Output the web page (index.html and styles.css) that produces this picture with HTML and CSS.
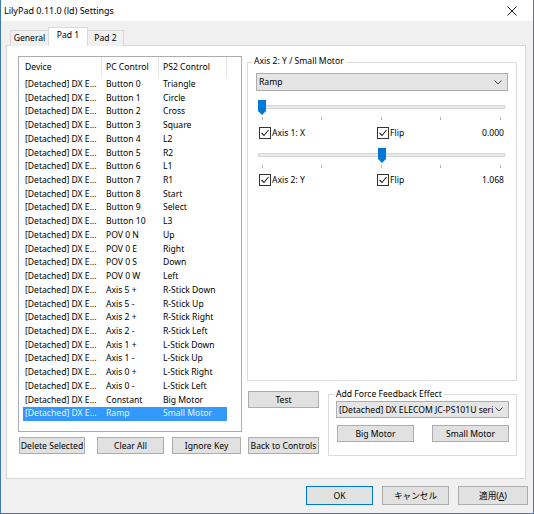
FILE: index.html
```html
<!DOCTYPE html>
<html>
<head>
<meta charset="utf-8">
<link rel="stylesheet" href="styles.css">
</head>
<body>
<div class="window">
  <div class="titlebar">
    <span class="title">LilyPad 0.11.0 (ld) Settings</span>
    <svg class="close" width="10" height="10" viewBox="0 0 10 10"><path d="M0.5 0.5 L9.5 9.5 M9.5 0.5 L0.5 9.5" stroke="#1a1a1a" stroke-width="1" fill="none"/></svg>
  </div>
  <div class="client">
    <div class="tabs">
      <div class="tab t-general">General</div>
      <div class="tab t-pad1 sel">Pad 1</div>
      <div class="tab t-pad2">Pad 2</div>
    </div>
    <div class="panel">
      <div class="leftcol">
        <div class="list">
          <div class="lhead">
            <div class="h1">Device</div>
            <div class="h2">PC Control</div>
            <div class="h3">PS2 Control</div>
          </div>
          <div class="row"><span class="c1">[Detached] DX E...</span><span class="c2">Button 0</span><span class="c3">Triangle</span></div>
          <div class="row"><span class="c1">[Detached] DX E...</span><span class="c2">Button 1</span><span class="c3">Circle</span></div>
          <div class="row"><span class="c1">[Detached] DX E...</span><span class="c2">Button 2</span><span class="c3">Cross</span></div>
          <div class="row"><span class="c1">[Detached] DX E...</span><span class="c2">Button 3</span><span class="c3">Square</span></div>
          <div class="row"><span class="c1">[Detached] DX E...</span><span class="c2">Button 4</span><span class="c3">L2</span></div>
          <div class="row"><span class="c1">[Detached] DX E...</span><span class="c2">Button 5</span><span class="c3">R2</span></div>
          <div class="row"><span class="c1">[Detached] DX E...</span><span class="c2">Button 6</span><span class="c3">L1</span></div>
          <div class="row"><span class="c1">[Detached] DX E...</span><span class="c2">Button 7</span><span class="c3">R1</span></div>
          <div class="row"><span class="c1">[Detached] DX E...</span><span class="c2">Button 8</span><span class="c3">Start</span></div>
          <div class="row"><span class="c1">[Detached] DX E...</span><span class="c2">Button 9</span><span class="c3">Select</span></div>
          <div class="row"><span class="c1">[Detached] DX E...</span><span class="c2">Button 10</span><span class="c3">L3</span></div>
          <div class="row"><span class="c1">[Detached] DX E...</span><span class="c2">POV 0 N</span><span class="c3">Up</span></div>
          <div class="row"><span class="c1">[Detached] DX E...</span><span class="c2">POV 0 E</span><span class="c3">Right</span></div>
          <div class="row"><span class="c1">[Detached] DX E...</span><span class="c2">POV 0 S</span><span class="c3">Down</span></div>
          <div class="row"><span class="c1">[Detached] DX E...</span><span class="c2">POV 0 W</span><span class="c3">Left</span></div>
          <div class="row"><span class="c1">[Detached] DX E...</span><span class="c2">Axis 5 +</span><span class="c3">R-Stick Down</span></div>
          <div class="row"><span class="c1">[Detached] DX E...</span><span class="c2">Axis 5 -</span><span class="c3">R-Stick Up</span></div>
          <div class="row"><span class="c1">[Detached] DX E...</span><span class="c2">Axis 2 +</span><span class="c3">R-Stick Right</span></div>
          <div class="row"><span class="c1">[Detached] DX E...</span><span class="c2">Axis 2 -</span><span class="c3">R-Stick Left</span></div>
          <div class="row"><span class="c1">[Detached] DX E...</span><span class="c2">Axis 1 +</span><span class="c3">L-Stick Down</span></div>
          <div class="row"><span class="c1">[Detached] DX E...</span><span class="c2">Axis 1 -</span><span class="c3">L-Stick Up</span></div>
          <div class="row"><span class="c1">[Detached] DX E...</span><span class="c2">Axis 0 +</span><span class="c3">L-Stick Right</span></div>
          <div class="row"><span class="c1">[Detached] DX E...</span><span class="c2">Axis 0 -</span><span class="c3">L-Stick Left</span></div>
          <div class="row"><span class="c1">[Detached] DX E...</span><span class="c2">Constant</span><span class="c3">Big Motor</span></div>
          <div class="row selected"><span class="c1">[Detached] DX E...</span><span class="c2">Ramp</span><span class="c3">Small Motor</span></div>
        </div>
        <div class="btnrow">
          <div class="btn b-delete">Delete Selected</div>
          <div class="btn b-clear">Clear All</div>
          <div class="btn b-ignore">Ignore Key</div>
        </div>
      </div>
      <div class="rightcol">
        <div class="group g-axis">
          <div class="legend">Axis 2: Y / Small Motor</div>
          <div class="combo c-ramp">
            <span>Ramp</span>
            <svg class="chev" width="8" height="5" viewBox="0 0 8 5"><path d="M0.5 0.5 L4 4 L7.5 0.5" stroke="#444" stroke-width="1" fill="none"/></svg>
          </div>
          <svg class="slider s1" width="252" height="23" viewBox="0 0 252 23">
            <rect x="2.5" y="7.5" width="246" height="3" fill="#e7eaea" stroke="#d6d6d6" stroke-width="1"/>
            <g fill="#b5b5b5">
              <rect x="6" y="19" width="1" height="3"/>
              <rect x="65" y="19" width="1" height="3"/>
              <rect x="125" y="19" width="1" height="3"/>
              <rect x="184" y="19" width="1" height="3"/>
              <rect x="244" y="19" width="1" height="3"/>
            </g>
            <polygon points="2,2 10,2 10,13 6,17 2,13" fill="#0078d7"/>
          </svg>
          <div class="chkrow">
            <div class="chkitem first">
              <svg class="chk" width="12" height="12" viewBox="0 0 12 12"><rect x="0.5" y="0.5" width="11" height="11" fill="#fff" stroke="#333"/><path d="M2.5 6 L5 8.5 L9.5 3" stroke="#222" stroke-width="1.1" fill="none"/></svg>
              <span>Axis 1: X</span>
            </div>
            <div class="chkitem">
              <svg class="chk" width="12" height="12" viewBox="0 0 12 12"><rect x="0.5" y="0.5" width="11" height="11" fill="#fff" stroke="#333"/><path d="M2.5 6 L5 8.5 L9.5 3" stroke="#222" stroke-width="1.1" fill="none"/></svg>
              <span>Flip</span>
            </div>
            <span class="val">0.000</span>
          </div>
          <svg class="slider s2" width="252" height="23" viewBox="0 0 252 23">
            <rect x="2.5" y="7.5" width="246" height="3" fill="#e7eaea" stroke="#d6d6d6" stroke-width="1"/>
            <g fill="#b5b5b5">
              <rect x="6" y="19" width="1" height="3"/>
              <rect x="65" y="19" width="1" height="3"/>
              <rect x="125" y="19" width="1" height="3"/>
              <rect x="184" y="19" width="1" height="3"/>
              <rect x="244" y="19" width="1" height="3"/>
            </g>
            <polygon points="122,2 130,2 130,13 126,17 122,13" fill="#0078d7"/>
          </svg>
          <div class="chkrow">
            <div class="chkitem first">
              <svg class="chk" width="12" height="12" viewBox="0 0 12 12"><rect x="0.5" y="0.5" width="11" height="11" fill="#fff" stroke="#333"/><path d="M2.5 6 L5 8.5 L9.5 3" stroke="#222" stroke-width="1.1" fill="none"/></svg>
              <span>Axis 2: Y</span>
            </div>
            <div class="chkitem">
              <svg class="chk" width="12" height="12" viewBox="0 0 12 12"><rect x="0.5" y="0.5" width="11" height="11" fill="#fff" stroke="#333"/><path d="M2.5 6 L5 8.5 L9.5 3" stroke="#222" stroke-width="1.1" fill="none"/></svg>
              <span>Flip</span>
            </div>
            <span class="val">1.068</span>
          </div>
        </div>
        <div class="lower">
          <div class="tcol">
            <div class="btn b-test">Test</div>
            <div class="btn b-back">Back to Controls</div>
          </div>
          <div class="group g-ff">
            <div class="legend">Add Force Feedback Effect</div>
            <div class="combo c-dev">
              <span>[Detached] DX ELECOM JC-PS101U seri</span>
              <svg class="chev" width="8" height="5" viewBox="0 0 8 5"><path d="M0.5 0.5 L4 4 L7.5 0.5" stroke="#444" stroke-width="1" fill="none"/></svg>
            </div>
            <div class="ffbtns">
              <div class="btn b-motor">Big Motor</div>
              <div class="btn b-motor">Small Motor</div>
            </div>
          </div>
        </div>
      </div>
    </div>
    <div class="dlgbtns">
      <div class="btn d-ok">OK</div>
      <div class="btn d-cancel">キャンセル</div>
      <div class="btn d-apply">適用(<u>A</u>)</div>
    </div>
  </div>
</div>
</body>
</html>
```

FILE: styles.css
```css
* { box-sizing: border-box; }
html, body { margin: 0; padding: 0; background: #fff; }
body {
  font-family: "Noto Sans", "Noto Sans CJK JP", sans-serif;
  font-size: 8.6px;
  color: #000;
}
.window {
  width: 534px;
  height: 514px;
  border: 1px solid #3e7bb6;
  border-top: none;
  background: #f0f0f0;
  display: flex;
  flex-direction: column;
}
.titlebar {
  height: 21px;
  background: #fff;
  display: flex;
  align-items: center;
  justify-content: space-between;
  padding: 0 16px 0 3px;
  flex: none;
}
.title { font-size: 9px; line-height: 21px; }
.close { display: block; }

.client {
  flex: 1;
  padding: 6px 0 0 5px;
  display: flex;
  flex-direction: column;
}
.tabs {
  display: flex;
  align-items: flex-end;
  height: 19px;
  margin-left: 4px;
  margin-bottom: -1px;
  position: relative;
  z-index: 1;
}
.tab {
  height: 16px;
  border: 1px solid #d9d9d9;
  border-bottom: none;
  background: #f0f0f0;
  display: flex;
  align-items: center;
  justify-content: center;
  padding-bottom: 1px;
}
.t-general { width: 38px; border-right: none; }
.t-pad1 { width: 40px; }
.t-pad2 { width: 36px; border-left: none; }
.tab.sel {
  height: 19px;
  background: #fff;
  padding-bottom: 4px;
}

.panel {
  width: 520px;
  height: 434px;
  border: 1px solid #d9d9d9;
  background: #fff;
  display: flex;
  padding: 10px 0 0 11px;
  flex: none;
}
.leftcol { width: 224px; display: flex; flex-direction: column; }
.list {
  height: 376px;
  border: 1px solid #abadb3;
  background: #fff;
}
.lhead {
  display: flex;
  height: 21px;
  align-items: stretch;
}
.lhead > div {
  border-right: 1px solid #e5e5e5;
  display: flex;
  align-items: center;
  padding-bottom: 1px;
}
.h1 { width: 83px; padding-left: 6px; }
.h2 { width: 57px; padding-left: 4px; }
.h3 { width: 68px; padding-left: 4px; }
.row {
  display: flex;
  height: 13.73px;
  line-height: 13.73px;
  margin-left: 4px;
  width: 204px;
  white-space: nowrap;
}
.c1 { width: 79px; padding-left: 2px; }
.c2 { width: 57px; padding-left: 4px; }
.c3 { width: 68px; padding-left: 4px; }
.row.selected { background: #3399ff; color: #e6f1ff; }

.btn {
  height: 17px;
  border: 1px solid #adadad;
  background: #e1e1e1;
  display: flex;
  align-items: center;
  justify-content: center;
  white-space: nowrap;
}
.btnrow { display: flex; margin-top: 5px; padding-left: 1px; }
.b-delete { width: 66px; }
.b-clear { width: 67px; margin-left: 12px; }
.b-ignore { width: 69px; margin-left: 8px; }

.rightcol { width: 270px; margin-left: 5px; display: flex; flex-direction: column; }
.group {
  border: 1px solid #dcdcdc;
  display: flex;
  flex-direction: column;
}
.legend {
  background: #fff;
  align-self: flex-start;
  padding: 0 2px;
  height: 11px;
  line-height: 11px;
  margin-top: -7px;
}
.g-axis { height: 319px; margin-top: 6px; }
.g-axis .legend { margin-left: 4px; }
.combo {
  height: 18px;
  border: 1px solid #adadad;
  background: #e5e5e5;
  display: flex;
  align-items: center;
  justify-content: space-between;
  padding: 0 5px 0 2px;
  white-space: nowrap;
  overflow: hidden;
}
.combo span { overflow: hidden; }
.chev { flex: none; display: block; }
.c-ramp { width: 252px; margin: 6px 0 0 8px; }
.slider { display: block; margin-left: 8px; flex: none; }
.s1 { margin-top: 7px; }
.s2 { margin-top: 7px; }
.chkrow {
  display: flex;
  align-items: center;
  height: 12px;
  margin-top: 6px;
  padding-left: 11px;
  padding-right: 12px;
}
.chkitem { display: flex; align-items: center; }
.chkitem.first { width: 118px; }
.chk { display: block; flex: none; margin-right: 1px; }
.val { margin-left: auto; }
.g-axis .chkrow:last-child { margin-top: 5px; }

.lower { display: flex; margin-top: 10px; }
.tcol { width: 71px; margin-left: 1px; display: flex; flex-direction: column; }
.b-test { width: 71px; }
.b-back { width: 71px; margin-top: 29px; }
.g-ff { width: 189px; height: 62px; margin-left: 9px; margin-top: 3px; }
.g-ff .legend { margin-left: 5px; margin-top: -6px; }
.c-dev { width: 173px; height: 17px; margin: 1px 0 0 7px; }
.ffbtns { display: flex; margin: 7px 0 0 8px; }
.b-motor { width: 77px; }
.b-motor + .b-motor { margin-left: 18px; }

.dlgbtns {
  display: flex;
  margin-top: 7px;
  padding-left: 300px;
}
.dlgbtns .btn { height: 19px; }
.d-ok { width: 67px; border-color: #0078d7; }
.d-cancel { width: 67px; margin-left: 9px; }
.d-apply { width: 70px; margin-left: 9px; }
.d-apply u { text-decoration: underline; }
```
